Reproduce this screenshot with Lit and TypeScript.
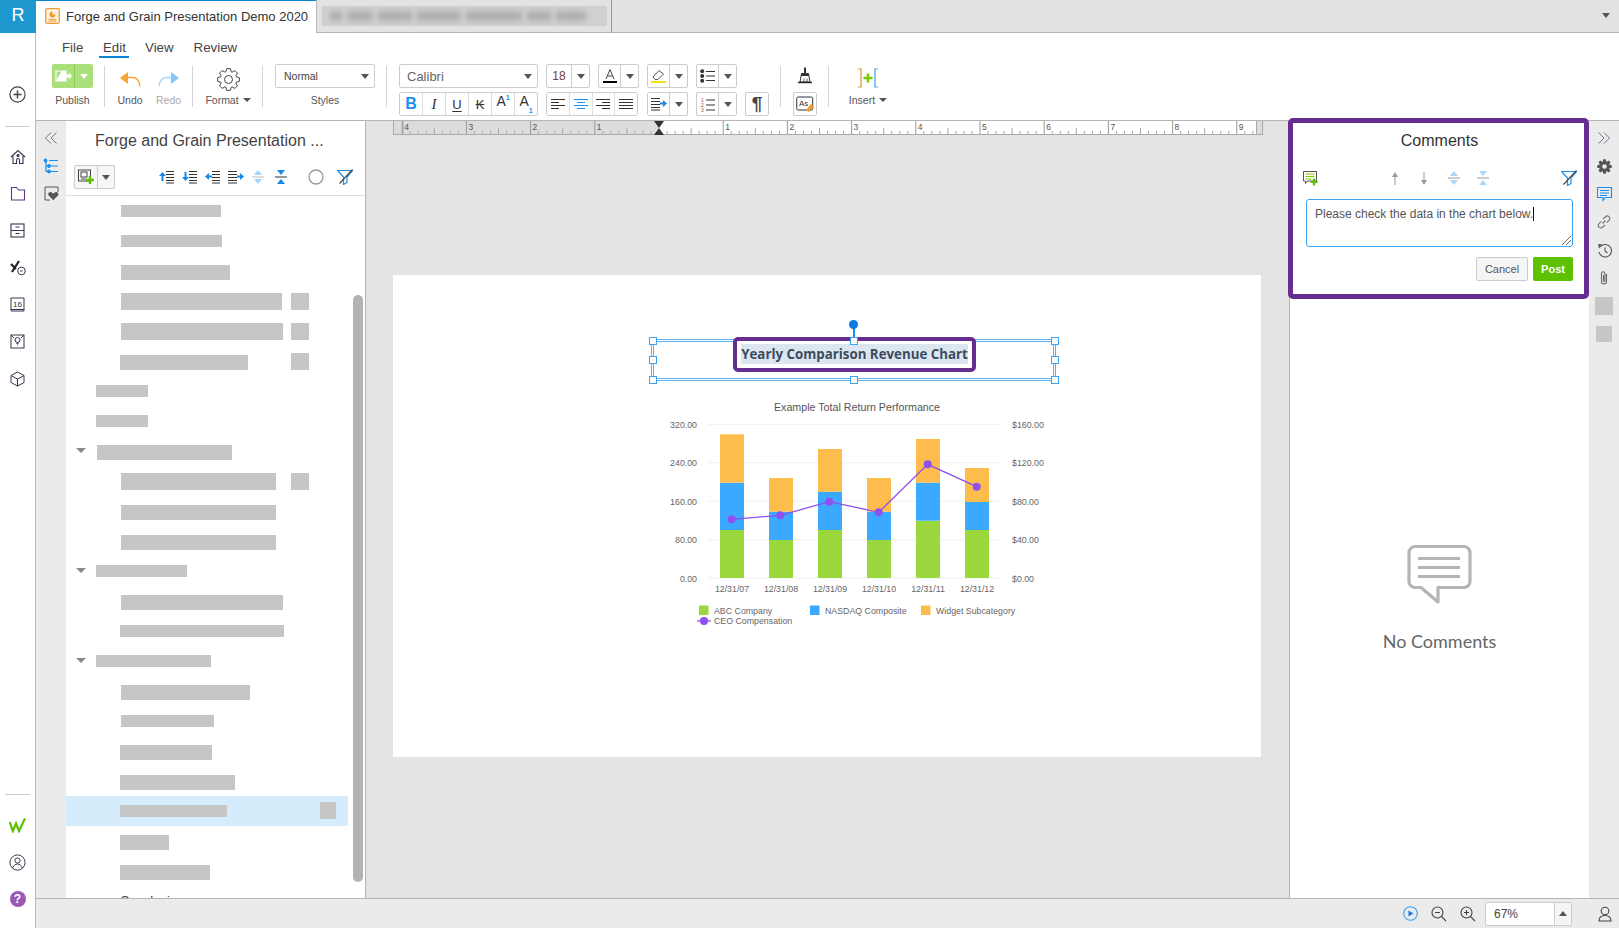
import { LitElement, html, css, svg } from "lit";
import { customElement } from "lit/decorators.js";

const gear = (cx: number, cy: number, rO: number, rI: number, n: number) => {
  const pts: string[] = [];
  for (let i = 0; i < n; i++) {
    const a = (i * 2 * Math.PI) / n;
    const w = Math.PI / n;
    const p = (r: number, t: number) => `${(cx + r * Math.cos(t)).toFixed(2)} ${(cy + r * Math.sin(t)).toFixed(2)}`;
    pts.push(p(rI, a - w * 0.85), p(rO, a - w * 0.42), p(rO, a + w * 0.42), p(rI, a + w * 0.85));
  }
  return "M" + pts.join("L") + "z";
};

const linesIcon = (ys: number[], spans: [number, number][], color = "#333") =>
  html`<svg width="16" height="16" viewBox="0 0 16 16" fill="none" stroke=${color} stroke-width="1">
    ${ys.map((y, i) => svg`<path d="M${spans[i][0]} ${y + 0.5}H${spans[i][1]}"/>`)}
  </svg>`;

const indentIcon = (kind: string) => {
  const blue = "#1688e8";
  const ar: Record<string, any> = {
    up: svg`<path d="M0 7L3.5 3 7 7H4.5V12h-2V7z" fill=${blue}/>`,
    down: svg`<path d="M0 8L3.5 12 7 8H4.5V3h-2V8z" fill=${blue}/>`,
    left: svg`<path d="M0 7.5L4 4V6.5H7V8.5H4V11z" fill=${blue}/>`,
    right: svg`<path d="M16 7.5L12 4V6.5H9V8.5H12V11z" fill=${blue}/>`,
  };
  const x0 = kind === "right" ? 0 : 7;
  const x1 = kind === "right" ? 9 : 15;
  return html`<svg width="16" height="16" viewBox="0 0 16 16">
    <path d="M${x0} 2.5H${x1}M${x0} 5.5H${x1}M${x0} 8.5H${x1}M${x0} 11.5H${x1}M${x0} 14H${x1}" stroke="#333" stroke-width="1" fill="none"/>
    ${ar[kind]}
  </svg>`;
};

const expandIcon = (color: string, lineColor: string) =>
  html`<svg width="14" height="16" viewBox="0 0 14 16">
    <path d="M7 1L11 6H3z M7 15L3 10H11z" fill=${color}/><path d="M1 8H13" stroke=${lineColor}/>
  </svg>`;
const collapseIcon = (color: string, lineColor: string) =>
  html`<svg width="14" height="16" viewBox="0 0 14 16">
    <path d="M3 1H11L7 6z M3 15H11L7 10z" fill=${color}/><path d="M1 8H13" stroke=${lineColor}/>
  </svg>`;
const filterIcon = () =>
  html`<svg width="16" height="16" viewBox="0 0 16 16" fill="none">
    <path d="M0.500 1.500H15.500L10 8V13.500L6.500 15.500V8z" stroke="#1b8fee" stroke-width="1.200" stroke-linejoin="round"/>
    <path d="M15.500 0.500L2.500 14.500" stroke="#4a4a4a" stroke-width="1.200"/>
  </svg>`;
const tri = html`<i class="tri"></i>`;

type Row = { x: number; y: number; w: number; h: number; sq?: [number, number, number, number]; arrow?: boolean; sel?: boolean };
const rows: Row[] = [
  { x: 121, y: 205, w: 100, h: 12 },
  { x: 121, y: 235, w: 101, h: 12 },
  { x: 121, y: 265, w: 109, h: 15 },
  { x: 121, y: 293, w: 161, h: 17, sq: [291, 293, 18, 17] },
  { x: 121, y: 323, w: 162, h: 17, sq: [291, 323, 18, 17] },
  { x: 120, y: 355, w: 128, h: 15, sq: [291, 353, 18, 17] },
  { x: 96, y: 385, w: 52, h: 12 },
  { x: 96, y: 415, w: 52, h: 12 },
  { x: 97, y: 445, w: 135, h: 15, arrow: true },
  { x: 121, y: 473, w: 155, h: 17, sq: [291, 473, 18, 17] },
  { x: 121, y: 505, w: 155, h: 15 },
  { x: 121, y: 535, w: 155, h: 15 },
  { x: 96, y: 565, w: 91, h: 12, arrow: true },
  { x: 121, y: 595, w: 162, h: 15 },
  { x: 120, y: 625, w: 164, h: 12 },
  { x: 96, y: 655, w: 115, h: 12, arrow: true },
  { x: 121, y: 685, w: 129, h: 15 },
  { x: 121, y: 715, w: 93, h: 12 },
  { x: 120, y: 745, w: 92, h: 15 },
  { x: 120, y: 775, w: 115, h: 15 },
  { x: 120, y: 805, w: 107, h: 12, sq: [320, 802, 16, 17], sel: true },
  { x: 120, y: 835, w: 49, h: 15 },
  { x: 120, y: 865, w: 90, h: 15 },
];

const ruler = () => {
  const marks: any[] = [];
  const origin = 266;
  const inch = 64.2;
  const nums: [number, number][] = [];
  for (let n = -4; n <= 9; n++) nums.push([n, origin + n * inch]);
  for (const [n, x] of nums) {
    if (n !== 0) {
      marks.push(svg`<path d="M${x.toFixed(1)} 0V13" stroke="#999"/>`);
      marks.push(svg`<text x=${(x + 2).toFixed(1)} y="9" class="rn">${Math.abs(n)}</text>`);
    }
    for (let k = 1; k < 8; k++) {
      const tx = x + (k * inch) / 8;
      if (tx > 862) continue;
      marks.push(svg`<path d="M${tx.toFixed(1)} ${k === 4 ? 7 : 10}V13" stroke="#aaa"/>`);
    }
  }
  return html`<svg class="ruler" width="870" height="14" viewBox="0 0 870 14">
    <rect width="870" height="14" fill="#dcdcdc"/>
    <rect x=${origin} width="597" height="14" fill="#fff"/>
    <path d="M0.5 0V13M10 0V13M863.5 0V13M869.5 0V13" stroke="#aaa" fill="none"/>
    ${marks}
    <path d="M0 13.5H870" stroke="#aaa"/>
    <path d="M261 0H271L266 7zM261 14H271L266 7z" fill="#333"/>
  </svg>`;
};

const chart = () => {
  const gridY = [424.3, 462.7, 501.3, 539.7, 578];
  const left = ["320.00", "240.00", "160.00", "80.00", "0.00"];
  const right = ["$160.00", "$120.00", "$80.00", "$40.00", "$0.00"];
  const bars = [
    [720, 530, 482.7, 434.3],
    [769, 540, 511.7, 478],
    [818, 530, 491.7, 449],
    [867, 540, 511.7, 478],
    [916, 520.7, 482.7, 439],
    [965, 530, 502, 468],
  ];
  const dates = ["12/31/07", "12/31/08", "12/31/09", "12/31/10", "12/31/11", "12/31/12"];
  const pts = [[731.7, 519.3], [780.3, 515.3], [829.3, 501.7], [878.7, 512.3], [927.7, 464.3], [976.7, 486.7]];
  return html`<svg class="chart" width="868" height="482" viewBox="393 275 868 482">
    <text x="857" y="411" text-anchor="middle" class="ct">Example Total Return Performance</text>
    ${gridY.map((y, i) => svg`
      <path d="M708 ${y}H1000" stroke="#f0f0f0"/>
      <text x="697" y=${y + 3.5} text-anchor="end" class="cl">${left[i]}</text>
      <text x="1012" y=${y + 3.5} class="cl">${right[i]}</text>`)}
    ${bars.map((b, i) => svg`
      <rect x=${b[0]} y=${b[1]} width="24" height=${578 - b[1]} fill="#9bd83e"/>
      <rect x=${b[0]} y=${b[2]} width="24" height=${b[1] - b[2]} fill="#3aa9ff"/>
      <rect x=${b[0]} y=${b[3]} width="24" height=${b[2] - b[3]} fill="#fdbd4c"/>
      <text x=${b[0] + 12} y="591.500" text-anchor="middle" class="cl">${dates[i]}</text>`)}
    <polyline points=${pts.map((p) => p.join(",")).join(" ")} fill="none" stroke="#8e50ee" stroke-width="1.3"/>
    ${pts.map((p) => svg`<circle cx=${p[0]} cy=${p[1]} r="4" fill="#8e50ee"/>`)}
    <rect x="699" y="605.5" width="9.5" height="9.5" fill="#9bd83e"/>
    <text x="714" y="613.5" class="cl">ABC Company</text>
    <rect x="810" y="605.5" width="9.5" height="9.5" fill="#3aa9ff"/>
    <text x="825" y="613.5" class="cl">NASDAQ Composite</text>
    <rect x="921" y="605.5" width="9.5" height="9.5" fill="#fdbd4c"/>
    <text x="936" y="613.5" class="cl">Widget Subcategory</text>
    <path d="M697 621H711" stroke="#8e50ee" stroke-width="1.3"/><circle cx="704" cy="621" r="4" fill="#8e50ee"/>
    <text x="714" y="623.5" class="cl">CEO Compensation</text>
  </svg>`;
};

@customElement("app-root")
export class AppRoot extends LitElement {
  static styles = css`
    :host { display: block; width: 1619px; height: 928px; overflow: hidden; background: #fff; font-family: "Liberation Sans", Arial, sans-serif; color: #333; }
    * { box-sizing: border-box; }
    svg { display: block; flex: none; }
    .app { display: flex; height: 928px; }

    .rail { width: 36px; flex: none; background: #fff; border-right: 1px solid #b9b9b9; display: flex; flex-direction: column; align-items: center; }
    .logo { width: 36px; height: 33px; background: #1d98cf; color: #fff; font-size: 18px; line-height: 31px; text-align: center; flex: none; margin-right: -1px; }
    .rail-plus { margin-top: 50px; height: 22px; display: flex; align-items: center; }
    .rail-sep { width: 25px; height: 1px; background: #ccc; flex: none; }
    .rail-sep.top { margin-top: 21px; }
    .rail-ic { height: 37px; width: 100%; display: flex; align-items: center; justify-content: center; flex: none; }
    .rail-list { margin-top: 11px; width: 100%; }
    .spring { flex: 1; }
    .rail-sep.bottom { margin-bottom: 13px; }
    .rail-foot { padding-bottom: 11px; width: 100%; }
    .rail-foot .rail-ic { height: 36.5px; }
    .help { width: 16px; height: 16px; border-radius: 50%; background: #9b59b6; color: #fff; font-size: 12px; font-weight: bold; text-align: center; line-height: 16px; }

    .main { flex: 1; min-width: 0; display: flex; flex-direction: column; }

    .tabs { height: 33px; display: flex; background: #e2e2e2; flex: none; }
    .tab-active { width: 280px; background: #fff; border-top: 1px solid #0a84d8; display: flex; align-items: center; padding: 0 0 2px 9px; gap: 6px; font-size: 13px; color: #333; white-space: nowrap; }
    .tab-other { width: 296px; border-left: 1px solid #bbb; border-right: 1px solid #999; border-bottom: 1px solid #b5b5b5; padding: 6px 4px 6px 5px; }
    .blur-box { height: 20px; background: #d0d0d0; display: flex; gap: 5px; align-items: center; padding: 0 8px; overflow: hidden; }
    .blur-seg { height: 10px; background: #b0b0b0; filter: blur(2.5px); flex: none; }
    .tab-fill { flex: 1; border-bottom: 1px solid #b5b5b5; display: flex; justify-content: flex-end; align-items: center; padding: 0 9px 2px 0; }
    .tri { display: block; width: 0; height: 0; border-left: 4.5px solid transparent; border-right: 4.5px solid transparent; border-top: 5px solid #555; flex: none; }

    .ribbon { height: 88px; flex: none; border-bottom: 1px solid #b5b5b5; display: flex; flex-direction: column; background: #fff; }
    .menu { height: 31px; display: flex; padding-left: 26px; font-size: 13.3px; color: #444; flex: none; }
    .menu span { height: 25px; padding: 6px 0 0; margin-top: 0; display: block; line-height: 17px; }
    .menu .m-file { width: 21px; }
    .menu .m-edit { margin-left: 16px; padding: 6px 4px 0; border-bottom: 2px solid #0a84d8; width: 30px; }
    .menu .m-view { margin-left: 16px; }
    .menu .m-review { margin-left: 20px; }

    .tools { display: flex; height: 56px; }
    .sep { width: 1px; height: 41px; margin-top: 2px; background: #d5d5d5; flex: none; }
    .lab { font-size: 10.5px; color: #555; line-height: 14px; text-align: center; white-space: nowrap; display: flex; justify-content: center; align-items: center; gap: 4px; }
    .lab .tri { border-left-width: 4px; border-right-width: 4px; border-top-width: 4px; }
    .lab.off { color: #aaa; }
    .g-pub { margin-left: 16px; width: 41px; }
    .s1 { margin-left: 11px; }
    .g-undo { margin-left: 13px; width: 24px; }
    .g-redo { margin-left: 15px; width: 23px; }
    .s2 { margin-left: 12px; }
    .g-format { margin-left: 13px; width: 44px; }
    .g-styles { margin-left: 12px; width: 100px; }
    .g-font { margin-left: 12px; width: 370px; display: flex; flex-direction: column; gap: 4px; }
    .g-brush { margin-left: 12px; width: 24px; display: flex; flex-direction: column; gap: 4px; align-items: center; }
    .g-brush .big { margin: 0; }
    .g-insert { margin-left: 19px; width: 40px; }
    .g-insert .big { margin: 0 0 1px; height: 28px; }
    .pub { height: 24px; background: #a9e07c; border-radius: 2px; display: flex; align-items: center; margin-bottom: 5px; }
    .pub-a { width: 23px; height: 24px; border-right: 1px solid #8fcb60; display: flex; align-items: center; justify-content: center; }
    .pub-b { flex: 1; display: flex; justify-content: center; }
    .pub-b .tri { border-top-color: #fff; }
    .big { height: 24px; margin: 3px 0 2px; display: flex; justify-content: center; align-items: center; }
    .big.tall { height: 28px; margin: 1px 0 0; }
    .select { height: 24px; border: 1px solid #ccc; border-radius: 2px; display: flex; align-items: center; justify-content: space-between; font-size: 10.5px; color: #444; padding: 0 5px 0 8px; margin-bottom: 5px; }
    .line { display: flex; gap: 8px; height: 24px; }
    .bg { display: flex; height: 24px; border: 1px solid #ccc; border-radius: 2px; background: #fff; flex: none; }
    .bg.as { justify-content: center; align-items: center; }
    .cell { width: 23px; display: flex; align-items: center; justify-content: center; border-left: 1px solid #ddd; font-size: 12px; color: #333; flex: 1; }
    .cell:first-child { border-left: 0; }
    .cell.drop { flex: 0 0 18px; width: 18px; border-left-color: #ccc; }
    .w139 { width: 139px; }
    .w139 .font-name { flex: 1; padding-left: 7px; font-size: 13px; color: #666; display: flex; justify-content: space-between; align-items: center; padding-right: 5px; }
    .w44 { width: 44px; }
    .w41 { width: 41px; }
    .w92 { width: 92px; }
    .w24 { width: 24px; }
    .line .gap9 { margin-left: 1px; }
    .b-b { color: #1b8fee; font-size: 16px; font-weight: bold; }
    .b-i { font-family: "Liberation Serif", serif; font-style: italic; font-size: 15px; }
    .b-u { font-size: 13px; text-decoration: underline; text-underline-offset: 2px; }
    .b-s { font-size: 13px; text-decoration: line-through; }
    .b-a { font-size: 14px; display: flex; align-items: flex-start; }
    .b-a sup, .b-a sub { font-size: 7px; color: #1b8fee; font-weight: bold; line-height: 1; }
    .b-a sup { align-self: flex-start; margin-top: 1px; }
    .b-a sub { align-self: flex-end; margin-bottom: 1px; }
    .b-18 { font-size: 12px; color: #7a3b3b; }
    .pil { font-size: 19px; font-weight: bold; color: #444; }

    .body { flex: 1; min-height: 0; display: flex; }
    .rail2 { width: 30px; background: #ebebeb; flex: none; display: flex; flex-direction: column; align-items: center; padding-top: 10px; gap: 12.5px; }
    .tree { width: 300px; flex: none; border-right: 1px solid #b5b5b5; background: #fff; display: flex; flex-direction: column; position: relative; }
    .tree-title { height: 39px; padding-left: 29px; font-size: 16px; line-height: 39px; color: #444; flex: none; }
    .tree-bar { height: 36px; flex: none; border-bottom: 1px solid #ddd; display: flex; align-items: center; padding-left: 8px; padding-bottom: 1px; }
    .addbtn { width: 41px; height: 24px; border: 1px solid #ccc; border-radius: 2px; background: #f6f6f6; display: flex; }
    .addbtn div:first-child { width: 23px; border-right: 1px solid #ccc; display: flex; align-items: center; justify-content: center; }
    .addbtn div:last-child { flex: 1; display: flex; align-items: center; justify-content: center; }
    .tb { margin-left: 7px; flex: none; }
    .tb.first { margin-left: 44px; }
    .tb.coll { margin-left: 9px; }
    .tb.circle { margin-left: 20px; }
    .tb.filt { margin-left: 13px; }
    .tree-list { flex: 1; min-height: 0; overflow: hidden; }
    .row { height: 30px; width: 282px; display: flex; align-items: flex-start; }
    .row.sel { background: #d5ecfc; }
    .row .tri { margin: 12px 0 0 10px; border-left-width: 5px; border-right-width: 5px; border-top-color: #888; }
    .bar { background: #c6c6c6; flex: none; }
    .lastrow { padding-left: 54px; font-size: 13px; line-height: 30px; color: #444; }
    .scroll { position: absolute; left: 287px; top: 174px; width: 10px; height: 587px; border-radius: 5px; background: #b3b3b3; }

    .center { flex: 1; min-width: 0; background: #e3e3e3; padding-left: 27px; }
    .ruler { margin-top: 0; }
    .page { width: 868px; height: 482px; margin-top: 140px; background: #fff; position: relative; }
    .chart { position: absolute; left: 0; top: 0; }
    .rn { font: 8.5px "Liberation Sans", sans-serif; fill: #555; }
    .ct { font: 10.7px "Liberation Sans", sans-serif; fill: #555; }
    .cl { font: 8.8px "Liberation Sans", sans-serif; fill: #666; }
    .sel-box { position: absolute; left: 258px; top: 64px; width: 405px; height: 42px; border: 3px double #5cb0f0; }
    .stem { position: absolute; left: 198.5px; top: -16px; width: 2px; height: 16px; background: #1b8fee; z-index: 2; }
    .knob { position: absolute; left: 195px; top: -22px; width: 9px; height: 9px; border-radius: 50%; background: #0a7ee0; z-index: 2; }
    .h { position: absolute; width: 8px; height: 8px; background: #fff; border: 1px solid #3aa3f5; }
    .h.tl { left: -5.5px; top: -5.5px; } .h.tc { left: 196px; top: -5.5px; z-index: 2; } .h.tr { right: -5.5px; top: -5.5px; }
    .h.ml { left: -5.5px; top: 14px; } .h.mr { right: -5.5px; top: 14px; }
    .h.bl { left: -5.5px; bottom: -5.5px; } .h.bc { left: 196px; bottom: -5.5px; } .h.br { right: -5.5px; bottom: -5.5px; }
    .frame { position: absolute; z-index: 1; left: 340px; top: 62px; width: 243px; height: 35px; border: 4px solid #662d91; border-radius: 5px; background: #fff; display: flex; align-items: center; justify-content: center; padding-bottom: 2px; }
    .title-text { background: #dbe6f1; font-family: "Open Sans", sans-serif; font-weight: bold; font-size: 13.3px; line-height: 20px; color: #3d4b5c; white-space: nowrap; }

    .comments { width: 300px; flex: none; background: #fff; border-left: 1px solid #b5b5b5; display: flex; flex-direction: column; align-items: center; }
    .composer { width: 301px; height: 181px; margin: -3px 0 0 -2px; position: relative; border: 5px solid #662d91; border-radius: 5px; background: #fff; flex: none; }
    .c-title { height: 34px; font-size: 16px; line-height: 36px; text-align: center; color: #333; padding-left: 2px; }
    .c-icons { display: flex; align-items: center; height: 24px; margin-top: 9px; }
    .c-icons .a { margin-left: 9px; }
    .c-icons .u { margin-left: 69px; }
    .c-icons .d { margin-left: 13px; }
    .c-icons .e { margin-left: 15px; }
    .c-icons .c { margin-left: 15px; }
    .c-icons .f { margin-left: 71px; }
    .ta { margin: 9px 0 0 13px; width: 267px; height: 48px; border: 1px solid #3aa3f5; border-radius: 3px; padding: 6px 8px; font-size: 12px; line-height: 16px; color: #555; position: relative; white-space: nowrap; }
    .caret { display: inline-block; width: 1px; height: 14px; background: #111; vertical-align: -3px; }
    .grip { position: absolute; right: 1px; bottom: 1px; }
    .c-btns { margin-top: 10px; padding-right: 11px; display: flex; justify-content: flex-end; gap: 5px; }
    .btn { height: 24px; border-radius: 2px; font-size: 11px; line-height: 22px; text-align: center; }
    .btn.cancel { width: 52px; background: #f5f5f5; border: 1px solid #ccc; color: #555; }
    .btn.post { width: 40px; background: #5dc000; color: #fff; font-weight: bold; font-size: 11px; line-height: 24px; }
    .empty-ic { margin-top: 245px; }
    .empty-t { margin-top: 23px; font-family: Lato, sans-serif; font-size: 18px; line-height: 24px; color: #666; }

    .rail3 { width: 30px; flex: none; background: #ebebeb; display: flex; flex-direction: column; align-items: center; padding-top: 3px; }
    .rail3 .ic { height: 28px; display: flex; align-items: center; justify-content: center; }
    .sq1 { width: 18px; height: 18px; background: #c6c6c6; margin-top: 5px; }
    .sq2 { width: 16px; height: 16px; background: #c6c6c6; margin-top: 11px; }

    .status { height: 30px; flex: none; background: #ebebeb; border-top: 1px solid #b5b5b5; display: flex; align-items: center; justify-content: flex-end; padding-right: 6px; }
    .zoomsel { width: 87px; height: 24px; margin-left: 9px; margin-right: 25px; border: 1px solid #ccc; border-radius: 2px; background: #fff; display: flex; font-size: 12px; color: #444; }
    .zoomsel .v { flex: 1; padding-left: 8px; line-height: 22px; }
    .zoomsel .u { width: 17px; border-left: 1px solid #ccc; display: flex; align-items: center; justify-content: center; background: #f5f5f5; }
    .zoomsel .tri { transform: rotate(180deg); }
    .st-ic { margin-left: 13px; }
  `;

  render() {
    return html`<div class="app">
      ${this.leftRail()}
      <div class="main">
        <div class="tabs">
          <div class="tab-active">
            <svg width="15" height="16" viewBox="0 0 15 16" fill="none">
              <rect x="0.7" y="0.7" width="13.6" height="14.6" rx="1.5" stroke="#f29a2e" stroke-width="1.3" fill="#fff3e0"/>
              <path d="M7.5 3.5a3 3 0 1 0 3 3h-3z" fill="#f29a2e"/><path d="M3.5 11.3H11.5M3.5 13H11.5" stroke="#f29a2e"/>
            </svg>
            <span>Forge and Grain Presentation Demo 2020</span>
          </div>
          <div class="tab-other"><div class="blur-box">
            ${[12, 26, 34, 44, 56, 24, 30].map((w) => html`<div class="blur-seg" style="width:${w}px"></div>`)}
          </div></div>
          <div class="tab-fill">${tri}</div>
        </div>
        ${this.ribbon()}
        <div class="body">
          <div class="rail2">
            <svg width="14" height="14" viewBox="0 0 14 14" fill="none" stroke="#6a7a8c" stroke-width="1"><path d="M7 1.5L1.5 7 7 12.5M12.5 1.5L7 7l5.5 5.5"/></svg>
            <svg width="16" height="16" viewBox="0 0 16 16" fill="none" stroke="#1b8fee" stroke-width="1.2"><path d="M3 3V13.5H5M3 8H5"/><path d="M6 2.5H15M7.5 8H15M7.5 13.5H15"/><circle cx="2.5" cy="2.5" r="1.3" fill="#1b8fee"/><circle cx="6" cy="8" r="1.3" fill="#1b8fee"/><circle cx="6" cy="13.5" r="1.3" fill="#1b8fee"/></svg>
            <svg width="15" height="15" viewBox="0 0 15 15" fill="none"><path d="M1 1H14V6M1 1V14H6" stroke="#555" stroke-width="1"/><path d="M10 14.5L5.5 10C4 8.5 5 6 7 6c1.3 0 2.3.8 3 2 .7-1.2 1.7-2 3-2 2 0 3 2.5 1.5 4z" fill="#555" transform="translate(-.5 0) scale(.98)"/></svg>
          </div>
          ${this.tree()}
          <div class="center">
            ${ruler()}
            <div class="page">
              ${chart()}
              <div class="sel-box">
                <div class="stem"></div><div class="knob"></div>
                ${["tl", "tc", "tr", "ml", "mr", "bl", "bc", "br"].map((c) => html`<div class="h ${c}"></div>`)}
              </div>
              <div class="frame"><span class="title-text">Yearly Comparison Revenue Chart</span></div>
            </div>
          </div>
          ${this.comments()}
          ${this.rightRail()}
        </div>
        ${this.status()}
      </div>
    </div>`;
  }

  leftRail() {
    const s = "#3c3450";
    return html`<div class="rail">
      <div class="logo">R</div>
      <div class="rail-plus"><svg width="17" height="17" viewBox="0 0 17 17" fill="none" stroke="#444" stroke-width="1.2"><circle cx="8.5" cy="8.5" r="7.6"/><path d="M8.5 4.5V12.5M4.5 8.5H12.5" stroke-width="1.5"/></svg></div>
      <div class="rail-sep top"></div>
      <div class="rail-list">
        <div class="rail-ic"><svg width="16" height="16" viewBox="0 0 16 16" fill="none" stroke=${s} stroke-width="1.1"><path d="M1 8L8 1.5 15 8M3 7V14.5H6.5V11a1.5 1.5 0 0 1 3 0V14.5H13V7"/><circle cx="8" cy="6.5" r="1" fill=${s}/></svg></div>
        <div class="rail-ic"><svg width="16" height="15" viewBox="0 0 16 15" fill="none" stroke="#5b3a8c" stroke-width="1.1"><path d="M1.5 14V1.5H6.5L8.5 4H14.5V14z"/></svg></div>
        <div class="rail-ic"><svg width="15" height="15" viewBox="0 0 15 15" fill="none" stroke=${s} stroke-width="1.1"><rect x="1" y="1" width="13" height="13"/><path d="M1 7.5H14M5.5 4H9.5M5.5 10.5H9.5"/></svg></div>
        <div class="rail-ic"><svg width="16" height="16" viewBox="0 0 16 16" fill="none"><path d="M1 4L6 9M9 1L2 12" stroke="#222" stroke-width="2.200"/><circle cx="11.500" cy="11" r="3.800" stroke=${s} stroke-width="1"/><path d="M10 11H12.500" stroke=${s}/></svg></div>
        <div class="rail-ic"><svg width="15" height="15" viewBox="0 0 15 15" fill="none" stroke=${s} stroke-width="1"><path d="M1 1H14V14H1z"/><path d="M1 12.5H14"/><text x="7.5" y="10" text-anchor="middle" font-size="8" font-family="Liberation Sans" fill="#333" stroke="none">16</text></svg></div>
        <div class="rail-ic"><svg width="15" height="15" viewBox="0 0 15 15" fill="none" stroke=${s} stroke-width="1"><rect x="1" y="1" width="13" height="13"/><path d="M1 1L4 4M14 1L11 4"/><circle cx="7.5" cy="6" r="2.5"/><path d="M6.5 9.5H8.5M7 11H8"/></svg></div>
        <div class="rail-ic"><svg width="15" height="16" viewBox="0 0 15 16" fill="none" stroke=${s} stroke-width="1"><path d="M7.5 1L14 4.5V11.5L7.5 15 1 11.5V4.5zM1 4.5L7.5 8 14 4.5M7.5 8V15"/></svg></div>
      </div>
      <div class="spring"></div>
      <div class="rail-sep bottom"></div>
      <div class="rail-foot">
        <div class="rail-ic"><svg width="17" height="15" viewBox="0 0 17 15" fill="none" stroke="#5dc000" stroke-width="2.200"><path d="M0.800 4L3.800 13 7 5.500 10 13 16 0.500"/></svg></div>
        <div class="rail-ic"><svg width="17" height="17" viewBox="0 0 17 17" fill="none" stroke=${s} stroke-width="1"><circle cx="8.5" cy="8.5" r="7.6"/><circle cx="8.5" cy="6.5" r="2.6"/><path d="M3.6 14C4.5 11.5 6.3 10 8.5 10s4 1.5 4.9 4"/></svg></div>
        <div class="rail-ic"><div class="help">?</div></div>
      </div>
    </div>`;
  }

  ribbon() {
    return html`<div class="ribbon">
      <div class="menu">
        <span class="m-file">File</span><span class="m-edit">Edit</span><span class="m-view">View</span><span class="m-review">Review</span>
      </div>
      <div class="tools">
        <div class="g-pub">
          <div class="pub">
            <div class="pub-a"><svg width="17" height="12" viewBox="0 0 17 12"><path d="M1 1H11V11H1z" fill="none" stroke="#fff" stroke-width="1.2"/><path d="M1 11L6.5 1H11V11z" fill="#fff"/><path d="M11 4.5H14V2.5L17 6 14 9.5V7.5H11z" fill="#fff"/></svg></div>
            <div class="pub-b">${tri}</div>
          </div>
          <div class="lab">Publish</div>
        </div>
        <div class="sep s1"></div>
        <div class="g-undo">
          <div class="big"><svg width="21" height="15" viewBox="0 0 21 15" fill="none"><path d="M0 6L8 0V12z" fill="#f9a533"/><path d="M7 5.5H12C16.5 5.5 19.5 9 20 14.5" stroke="#f9a533" stroke-width="1.4"/></svg></div>
          <div class="lab">Undo</div>
        </div>
        <div class="g-redo">
          <div class="big"><svg width="21" height="15" viewBox="0 0 21 15" fill="none"><path d="M21 6L13 0V12z" fill="#85c6fa"/><path d="M14 5.5H9C4.5 5.5 1.5 9 1 14.5" stroke="#a8d6fb" stroke-width="1.4"/></svg></div>
          <div class="lab off">Redo</div>
        </div>
        <div class="sep s2"></div>
        <div class="g-format">
          <div class="big tall"><svg width="23" height="23" viewBox="0 0 23 23" fill="none" stroke="#444" stroke-width="1"><path d=${gear(11.5, 11.5, 11, 8.2, 8)} stroke-linejoin="round"/><circle cx="11.5" cy="11.5" r="4"/></svg></div>
          <div class="lab">Format ${tri}</div>
        </div>
        <div class="sep s2"></div>
        <div class="g-styles">
          <div class="select"><span>Normal</span>${tri}</div>
          <div class="lab">Styles</div>
        </div>
        <div class="sep s1"></div>
        <div class="g-font">
          <div class="line">
            <div class="bg w139"><div class="font-name"><span>Calibri</span>${tri}</div></div>
            <div class="bg w44"><div class="cell b-18">18</div><div class="cell drop">${tri}</div></div>
            <div class="bg w41"><div class="cell"><svg width="14" height="16" viewBox="0 0 14 16" fill="none"><path d="M3 11L7 1.5 11 11M4.5 8H9.5" stroke="#444" stroke-width="1"/><rect y="13" width="14" height="2" fill="#000"/></svg></div><div class="cell drop">${tri}</div></div>
            <div class="bg w41"><div class="cell"><svg width="15" height="16" viewBox="0 0 15 16" fill="none"><path d="M2 9L8 2.5 12.5 6 7 11.5H4z" stroke="#555" stroke-width="1"/><rect y="13" width="15" height="2" fill="#f5e50a"/></svg></div><div class="cell drop">${tri}</div></div>
            <div class="bg w41"><div class="cell"><svg width="15" height="14" viewBox="0 0 15 14"><circle cx="2.2" cy="2.2" r="2" fill="#333"/><circle cx="2.2" cy="7" r="2" fill="#333"/><circle cx="2.2" cy="11.8" r="2" fill="#333"/><path d="M6 2.5H15M6 7H15M6 11.5H15" stroke="#333"/></svg></div><div class="cell drop">${tri}</div></div>
          </div>
          <div class="line">
            <div class="bg w139">
              <div class="cell b-b">B</div><div class="cell b-i">I</div><div class="cell b-u">U</div><div class="cell b-s">K</div>
              <div class="cell b-a">A<sup>1</sup></div><div class="cell b-a">A<sub>1</sub></div>
            </div>
            <div class="bg w92">
              <div class="cell">${linesIcon([3, 6, 9, 12], [[1, 15], [1, 9], [1, 15], [1, 9]])}</div>
              <div class="cell">${linesIcon([3, 6, 9, 12], [[1, 15], [4, 12], [1, 15], [4, 12]], "#1b8fee")}</div>
              <div class="cell">${linesIcon([3, 6, 9, 12], [[1, 15], [7, 15], [1, 15], [7, 15]])}</div>
              <div class="cell">${linesIcon([3, 6, 9, 12], [[1, 15], [1, 15], [1, 15], [1, 15]])}</div>
            </div>
            <div class="bg w41 gap9"><div class="cell">${indentIcon("right")}</div><div class="cell drop">${tri}</div></div>
            <div class="bg w41"><div class="cell"><svg width="15" height="15" viewBox="0 0 15 15"><text x="1" y="5" font-size="5" font-family="Liberation Sans" fill="#a0522d">1</text><text x="1" y="10" font-size="5" font-family="Liberation Sans" fill="#a0522d">2</text><text x="1" y="15" font-size="5" font-family="Liberation Sans" fill="#a0522d">3</text><path d="M6 3H15M6 8H15M6 13H15" stroke="#333"/></svg></div><div class="cell drop">${tri}</div></div>
            <div class="bg w24"><div class="cell pil">¶</div></div>
          </div>
        </div>
        <div class="sep s1"></div>
        <div class="g-brush">
          <div class="big"><svg width="14" height="18" viewBox="0 0 14 18" fill="none"><path d="M6 0.500H8V6H6z" fill="#333"/><path d="M3.500 6.500H10.500L12 15H2z" stroke="#333" stroke-width="1" fill="#fff"/><path d="M3.200 6.500H10.800V9H3.200z" fill="#333"/><path d="M6 11.500V15M9 11.500V15" stroke="#333" stroke-width=".8"/><path d="M0 15.500H14" stroke="#222" stroke-width="1.400"/></svg></div>
          <div class="bg w24 as"><svg width="18" height="16" viewBox="0 0 18 16" fill="none"><rect x="0.7" y="1" width="16" height="13" rx="1.5" stroke="#333"/><text x="3" y="10" font-size="8" font-family="Liberation Sans" fill="#333">As</text><path d="M10 14L15 8l3 2-5 6z" fill="#f29a2e"/></svg></div>
        </div>
        <div class="sep s1"></div>
        <div class="g-insert">
          <div class="big"><svg width="20" height="20" viewBox="0 0 20 20" fill="none"><path d="M0 1H3V19H0" stroke="#e0922a" stroke-width="1.2"/><path d="M20 1H17V19H20" stroke="#3aa3f5" stroke-width="1.2"/><path d="M10 5.5V14.5M5.5 10H14.5" stroke="#7ac800" stroke-width="2.6"/></svg></div>
          <div class="lab">Insert ${tri}</div>
        </div>
      </div>
    </div>`;
  }

  tree() {
    return html`<div class="tree">
      <div class="tree-title">Forge and Grain Presentation ...</div>
      <div class="tree-bar">
        <div class="addbtn"><div><svg width="16" height="16" viewBox="0 0 16 16" fill="none"><rect x="0.5" y="1" width="12" height="11" stroke="#444"/><rect x="3" y="3" width="6" height="5" stroke="#444"/><path d="M3 10H8" stroke="#444"/><path d="M12 7V15M8 11H16" stroke="#5dc000" stroke-width="2.4"/></svg></div><div>${tri}</div></div>
        <div class="tb first">${indentIcon("up")}</div>
        <div class="tb">${indentIcon("down")}</div>
        <div class="tb">${indentIcon("left")}</div>
        <div class="tb">${indentIcon("right")}</div>
        <div class="tb">${expandIcon("#a8d6fb", "#bbb")}</div>
        <div class="tb coll">${collapseIcon("#1688e8", "#333")}</div>
        <div class="tb circle"><svg width="16" height="16" viewBox="0 0 16 16" fill="none"><circle cx="8" cy="8" r="7" stroke="#999" stroke-width="1.3"/></svg></div>
        <div class="tb filt">${filterIcon()}</div>
      </div>
      <div class="tree-list">
        ${rows.map((r, i) => {
          const top = 196 + i * 30;
          const start = r.arrow ? 86 : 66;
          return html`<div class="row ${r.sel ? "sel" : ""}">
            ${r.arrow ? tri : ""}
            <div class="bar" style="margin-left:${r.x - start}px;margin-top:${r.y - top}px;width:${r.w}px;height:${r.h}px"></div>
            ${r.sq ? html`<div class="bar" style="margin-left:${r.sq[0] - r.x - r.w}px;margin-top:${r.sq[1] - top}px;width:${r.sq[2]}px;height:${r.sq[3]}px"></div>` : ""}
          </div>`;
        })}
        <div class="row lastrow">Conclusion</div>
      </div>
      <div class="scroll"></div>
    </div>`;
  }

  comments() {
    const arrow = (d: string) => html`<svg width="16" height="16" viewBox="0 0 16 16"><path d=${d} fill="#999"/></svg>`;
    return html`<div class="comments">
      <div class="composer">
        <div class="c-title">Comments</div>
        <div class="c-icons">
          <div class="a"><svg width="16" height="16" viewBox="0 0 16 16" fill="none"><path d="M1.5 1.5H14.5V11H5.5L3.5 13.5V11H1.5z" stroke="#555" stroke-width="1"/><path d="M3.5 4H12.5M3.5 6.5H12.5M3.5 9H9" stroke="#7ac800"/><path d="M12 8.5V15.5M8.5 12H15.5" stroke="#5dc000" stroke-width="2.2"/></svg></div>
          <div class="u">${arrow("M8 2L11 7H8.500V15H7.500V7H5z")}</div>
          <div class="d">${arrow("M8 15L11 10H8.500V2H7.500V10H5z")}</div>
          <div class="e">${expandIcon("#a8d6fb", "#999")}</div>
          <div class="c">${collapseIcon("#a8d6fb", "#999")}</div>
          <div class="f">${filterIcon()}</div>
        </div>
        <div class="ta">Please check the data in the chart below.<span class="caret"></span>
          <svg class="grip" width="9" height="9" viewBox="0 0 9 9" stroke="#666" fill="none"><path d="M0 9L9 0M4 9L9 4"/></svg>
        </div>
        <div class="c-btns"><div class="btn cancel">Cancel</div><div class="btn post">Post</div></div>
      </div>
      <svg class="empty-ic" width="70" height="62" viewBox="0 0 70 62" fill="none" stroke="#b5b5b5" stroke-width="3.2">
        <path d="M10 2.5H59a6 6 0 0 1 6 6V37.500a6 6 0 0 1-6 6H33V58L16 43.500H10a6 6 0 0 1-6-6V8.500a6 6 0 0 1 6-6z" stroke-linejoin="round"/>
        <path d="M13 14.500H55M13 23.500H55M13 32.500H55"/>
      </svg>
      <div class="empty-t">No Comments</div>
    </div>`;
  }

  rightRail() {
    return html`<div class="rail3">
      <div class="ic"><svg width="14" height="14" viewBox="0 0 14 14" fill="none" stroke="#6a7a8c" stroke-width="1"><path d="M7 1.5L12.5 7 7 12.5M1.500 1.500L7 7l-5.500 5.500"/></svg></div>
      <div class="ic"><svg width="15" height="15" viewBox="0 0 15 15"><path d=${gear(7.5, 7.5, 7.4, 5.3, 8)} fill="#555"/><circle cx="7.5" cy="7.5" r="2.300" fill="#ebebeb"/></svg></div>
      <div class="ic"><svg width="17" height="16" viewBox="0 0 17 16" fill="none" stroke="#1b8fee" stroke-width="1.1"><path d="M1.500 1.500H15.500V11.500H9.500L7 14.500V11.500H1.500z"/><path d="M4 4.500H13M4 7H13M4 9.500H11"/></svg></div>
      <div class="ic"><svg width="14" height="14" viewBox="0 0 14 14" fill="none" stroke="#777" stroke-width="1.2"><path d="M5.500 8.500L8.500 5.500"/><path d="M6 4L8.500 1.800a2.400 2.400 0 0 1 3.500 3.500L9.800 7.600"/><path d="M8 10L5.500 12.200a2.400 2.400 0 0 1-3.500-3.500L4.200 6.400"/></svg></div>
      <div class="ic"><svg width="15" height="15" viewBox="0 0 15 15" fill="none" stroke="#555" stroke-width="1.1"><path d="M3.500 3.500A6.300 6.300 0 1 1 2 9"/><path d="M1 1L5.500 1.500 2 5.500z" fill="#555" stroke="none"/><path d="M8 4.500V8L10.500 10"/></svg></div>
      <div class="ic"><svg width="10" height="16" viewBox="0 0 10 16" fill="none" stroke="#666" stroke-width="1.1"><path d="M7.500 4V11.500a2.500 2.500 0 0 1-5 0V3.500a1.700 1.700 0 0 1 3.400 0V10.500a.7.700 0 0 1-1.400 0V5"/></svg></div>
      <div class="sq1"></div>
      <div class="sq2"></div>
    </div>`;
  }

  status() {
    return html`<div class="status">
      <div class="st-ic"><svg width="15" height="15" viewBox="0 0 15 15" fill="none"><circle cx="7.500" cy="7.500" r="6.800" stroke="#3aa3f5" stroke-width="1.1"/><path d="M5.500 4.500L10.500 7.500 5.500 10.500z" fill="#1b7fd8"/></svg></div>
      <div class="st-ic"><svg width="16" height="16" viewBox="0 0 16 16" fill="none" stroke="#444" stroke-width="1.1"><circle cx="6.500" cy="6.500" r="5.500"/><path d="M10.500 10.500L15 15M4 6.500H9"/></svg></div>
      <div class="st-ic"><svg width="16" height="16" viewBox="0 0 16 16" fill="none" stroke="#444" stroke-width="1.1"><circle cx="6.500" cy="6.500" r="5.500"/><path d="M10.500 10.500L15 15M4 6.500H9M6.500 4V9"/></svg></div>
      <div class="zoomsel"><div class="v">67%</div><div class="u">${tri}</div></div>
      <svg width="16" height="16" viewBox="0 0 16 16" fill="none" stroke="#444" stroke-width="1.1"><circle cx="8" cy="5" r="3.800"/><path d="M2 15C2 11.500 4.500 9.500 8 9.500s6 2 6 5.500z"/></svg>
    </div>`;
  }
}
